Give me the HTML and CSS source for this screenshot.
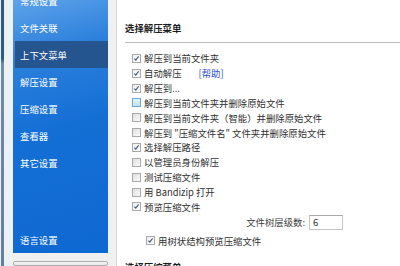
FILE: index.html
```html
<!DOCTYPE html>
<html lang="zh-CN">
<head>
<meta charset="utf-8">
<link rel="stylesheet" href="styles.css">
</head>
<body>
<div class="window">
  <div class="edge"><div class="edge-bar"></div></div>
  <div class="side">
    <nav class="nav">
      <div class="item first">常规设置</div>
      <div class="item">文件关联</div>
      <div class="item sel">上下文菜单</div>
      <div class="item">解压设置</div>
      <div class="item">压缩设置</div>
      <div class="item">查看器</div>
      <div class="item">其它设置</div>
      <div class="item last">语言设置</div>
    </nav>
    <div class="btn"></div>
  </div>
  <div class="split"></div>
  <main class="content">
    <div class="heading">选择解压菜单</div>
    <div class="rule"></div>
    <div class="list">
      <div class="row"><span class="cb on"><svg viewBox="0 0 9 9"><path d="M1.8 4.6 L3.6 6.6 L7.2 1.8"/></svg></span>解压到当前文件夹</div>
      <div class="row"><span class="cb on"><svg viewBox="0 0 9 9"><path d="M1.8 4.6 L3.6 6.6 L7.2 1.8"/></svg></span>自动解压<span class="help">[帮助]</span></div>
      <div class="row"><span class="cb on"><svg viewBox="0 0 9 9"><path d="M1.8 4.6 L3.6 6.6 L7.2 1.8"/></svg></span>解压到...</div>
      <div class="row"><span class="cb hover"></span>解压到当前文件夹并删除原始文件</div>
      <div class="row"><span class="cb"></span>解压到当前文件夹（智能）并删除原始文件</div>
      <div class="row"><span class="cb"></span>解压到 "压缩文件名" 文件夹并删除原始文件</div>
      <div class="row"><span class="cb on"><svg viewBox="0 0 9 9"><path d="M1.8 4.6 L3.6 6.6 L7.2 1.8"/></svg></span>选择解压路径</div>
      <div class="row"><span class="cb"></span>以管理员身份解压</div>
      <div class="row"><span class="cb"></span>测试压缩文件</div>
      <div class="row"><span class="cb"></span>用 Bandizip 打开</div>
      <div class="row"><span class="cb on"><svg viewBox="0 0 9 9"><path d="M1.8 4.6 L3.6 6.6 L7.2 1.8"/></svg></span>预览压缩文件</div>
    </div>
    <div class="depth">
      <span class="depth-label">文件树层级数:</span>
      <span class="input">6</span>
    </div>
    <div class="row sub"><span class="cb on"><svg viewBox="0 0 9 9"><path d="M1.8 4.6 L3.6 6.6 L7.2 1.8"/></svg></span>用树状结构预览压缩文件</div>
    <div class="heading second">选择压缩菜单</div>
  </main>
</div>
</body>
</html>
```

FILE: styles.css
```css
* { box-sizing: border-box; }
html, body {
  margin: 0;
  padding: 0;
  width: 400px;
  height: 266px;
  overflow: hidden;
  background: #ffffff;
  font-family: "Noto Sans CJK SC", "Liberation Sans", sans-serif;
  font-size: 9.4px;
  color: #303030;
}
.window {
  display: flex;
  width: 400px;
  height: 266px;
  overflow: hidden;
}
.edge {
  width: 13px;
  flex: none;
  background: #eef1f4;
  padding-left: 1px;
}
.edge-bar {
  width: 3px;
  height: 100%;
  background: linear-gradient(180deg, #2c5a8e 0%, #2c5a8e 22%, #6f8cad 24%, #5f7fa5 100%);
}
.side {
  width: 95px;
  flex: none;
  display: flex;
  flex-direction: column;
  background: #f0f0f0;
}
.nav {
  height: 253px;
  flex: none;
  display: flex;
  flex-direction: column;
  overflow: hidden;
  background: linear-gradient(165deg, #5ea3ea 0%, #2c80dc 22%, #146fd5 50%, #0e68d1 100%);
}
.item {
  height: 27px;
  flex: none;
  display: flex;
  align-items: center;
  padding-left: 7px;
  color: #ffffff;
  white-space: nowrap;
}
.item.first { margin-top: -13px; }
.item.sel {
  margin-left: 2px;
  padding-left: 5px;
  background: #24558f;
}
.item.last { margin-top: auto; }
.btn {
  margin-top: 8px;
  height: 20px;
  border: 1px solid #adadad;
  border-radius: 2px;
  background: linear-gradient(180deg, #f6f6f6, #e6e6e6);
}
.split {
  width: 9px;
  flex: none;
  background: #f0f0f0;
  border-right: 1px solid #d6d6d6;
}
.content {
  flex: 1;
  padding-left: 8px;
  padding-top: 21px;
  background: #ffffff;
}
.heading {
  height: 14px;
  line-height: 14px;
  font-weight: bold;
  color: #1e1e1e;
  white-space: nowrap;
}
.heading.second { margin-top: 12px; }
.rule {
  margin-top: 7px;
  height: 1px;
  background: #bdbdbd;
}
.list {
  margin-top: 8px;
}
.row {
  height: 14.85px;
  display: flex;
  align-items: center;
  padding-left: 7px;
  white-space: nowrap;
}
.row.sub {
  padding-left: 21px;
  margin-top: 3px;
  height: 15px;
}
.cb {
  width: 9px;
  height: 9px;
  flex: none;
  margin-right: 3px;
  border: 1px solid #a9a9a9;
  background: linear-gradient(135deg, #dedede 0%, #f2f2f2 70%, #fbfbfb 100%);
  display: flex;
}
.cb.on { background: linear-gradient(135deg, #eeeeee, #ffffff); }
.cb.hover {
  border-color: #6aa5d6;
  background: linear-gradient(180deg, #e4f4fc 0%, #bfe3f7 100%);
}
.cb svg {
  width: 7px;
  height: 7px;
}
.cb svg path {
  fill: none;
  stroke: #3f5277;
  stroke-width: 1.3;
}
.help {
  margin-left: 17px;
  color: #2a4fd1;
}
.depth {
  height: 16px;
  display: flex;
  align-items: center;
  padding-left: 120px;
}
.depth-label {
  width: 60px;
  text-align: right;
  margin-right: 4px;
  color: #3a3a3a;
  white-space: nowrap;
}
.input {
  width: 34px;
  height: 15px;
  border: 1px solid #c4c4c4;
  border-top-color: #a9a9a9;
  padding-left: 3px;
  line-height: 13px;
  background: #ffffff;
}
```
